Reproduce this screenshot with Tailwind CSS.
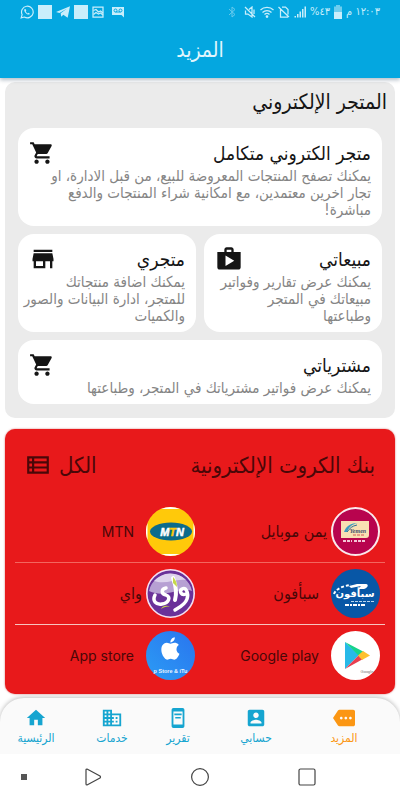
<!DOCTYPE html>
<html lang="ar" dir="rtl">
<head>
    <meta charset="UTF-8">
    <meta name="viewport" content="width=device-width, initial-scale=1.0">
    <title>المزيد</title>
    <!-- Tailwind CSS for styling -->
    <script src="https://cdn.jsdelivr.net/npm/@tailwindcss/browser@4"></script>
</head>
<body class="flex min-h-screen flex-col bg-white font-['DejaVu_Sans_Condensed','DejaVu_Sans',sans-serif] text-[#151515]">

    <!-- App header with the status bar -->
    <header class="relative z-10 bg-[#04a7e0] shadow-[0_2px_4px_rgba(0,40,70,0.3)]">
        <div dir="ltr" class="flex h-6 items-center justify-between pr-5 pl-5 text-[#c9eefb]">
            <div class="flex items-center gap-1">
                <svg class="size-[14px]" viewBox="0 0 24 24" fill="none" stroke="currentColor" stroke-width="2"><path d="M2 22l1.600-5.600A10 10 0 1 1 7.400 20.600z"/><path d="M8 7c-2 2 0 5.500 3 7.800 3 2.200 5 2 6 0l-2.500-1.500-1.500 1.200c-1.500-.6-2.600-1.800-3.200-3.200l1-1.300L9.500 7z" fill="currentColor" stroke="none"/></svg>
                <span class="size-[14px] bg-current"></span>
                <svg class="size-[14px]" viewBox="0 0 24 24" fill="currentColor"><path d="M0 12L24 2l-4 20-7.500-5.500L9 20l-1-6L19 6 6 13.500z"/></svg>
                <span class="size-[14px] bg-current"></span>
                <svg class="size-3" viewBox="0 0 24 24" fill="none" stroke="currentColor" stroke-width="2.500"><path d="M2 2h20v20H2z"/><path d="M3 9l5-2 5 5 4-2 5 4M3 17l5-4 5 3 4-2 5 4"/></svg>
                <svg class="ml-1 size-3" viewBox="0 0 24 24"><path fill="currentColor" d="M0 2h24v21l-5-5H0z"/><g fill="none" stroke="#04a7e0" stroke-width="2"><circle cx="7" cy="9" r="3"/><circle cx="17" cy="9" r="3"/><path d="M7 12h10"/></g></svg>
            </div>
            <div class="flex items-center gap-1 text-[11px]">
                <svg class="h-3 w-2 opacity-50" viewBox="0 0 16 24" fill="none" stroke="currentColor" stroke-width="2"><path d="M2 6l12 11-6 5V2l6 5L2 18"/></svg>
                <svg class="ml-1 size-3" viewBox="0 0 24 24" fill="none" stroke="currentColor" stroke-width="2.500"><path d="M2 2l20 20M3 9v7h5l8 6V2l-6 5M20 7v9"/></svg>
                <svg class="h-3 w-[14px]" viewBox="0 0 28 24" fill="none" stroke="currentColor" stroke-width="2.500"><path d="M1 8c7-7 19-7 26 0M5 13c5-5 13-5 18 0M9 17c3-3 7-3 10 0"/><circle cx="14" cy="21" r="1.500" fill="currentColor"/></svg>
                <svg class="size-3" viewBox="0 0 24 24" fill="none" stroke="currentColor" stroke-width="2.500"><path d="M1 2l21 20M5 7v15h15M8 2h7l5 5v10"/></svg>
                <svg class="size-3" viewBox="0 0 24 24" fill="currentColor"><path d="M1 20h3v3H1zM6 16h3v7H6zM11 11h3v12h-3zM16 6h3v17h-3zM21 1h3v22h-3z"/></svg>
                <span>%٤٣</span>
                <svg class="h-[14px] w-2" viewBox="0 0 16 28" fill="currentColor"><path d="M4 0h8v3h4v25H0V3h4z" opacity=".55"/><path d="M0 14h16v14H0z"/></svg>
                <span dir="rtl">١٢:٠٣ م</span>
            </div>
        </div>
        <h1 class="h-[54px] pt-2 text-center text-[21px] leading-9 text-[#e2f6fd]">المزيد</h1>
    </header>

    <main class="flex grow flex-col gap-[11px] px-[5px] pt-1 pb-1">
        <!-- Online store -->
        <section class="rounded-[10px] bg-[#ebebeb] px-[13px] pb-[14px]">
            <h2 class="-mr-[5px] h-[46px] text-[21px] leading-[40px]">المتجر الإلكتروني</h2>
            <div class="grid grid-cols-2 gap-2">
                <a href="#" class="col-span-2 block rounded-2xl bg-white px-[11px] pt-[10px] pb-[7px]">
                    <div class="flex h-[30px] items-center justify-between">
                        <h3 class="text-[19px]">متجر الكتروني متكامل</h3>
                        <svg class="size-[26px]" viewBox="0 0 24 24" fill="currentColor"><path d="M7 18c-1.100 0-1.990.9-1.990 2S5.900 22 7 22s2-.9 2-2-.9-2-2-2zM1 2v2h2l3.600 7.590-1.350 2.450c-.16.280-.25.610-.25.960 0 1.100.9 2 2 2h12v-2H7.420c-.14 0-.25-.11-.25-.25l.03-.12.900-1.630h7.450c.75 0 1.410-.41 1.750-1.030l3.580-6.490c.08-.14.120-.31.120-.48 0-.55-.45-1-1-1H5.210l-.94-2H1zm16 16c-1.100 0-1.990.9-1.990 2s.89 2 1.990 2 2-.9 2-2-.9-2-2-2z"/></svg>
                    </div>
                    <p class="text-[15px] leading-[17px] whitespace-nowrap text-[#858585]">يمكنك تصفح المنتجات المعروضة للبيع، من قبل الادارة، او<br>تجار اخرين معتمدين، مع امكانية شراء المنتجات والدفع<br>مباشرة!</p>
                </a>
                <a href="#" class="block rounded-2xl bg-white px-[11px] pt-[10px] pb-[7px]">
                    <div class="flex h-[30px] items-center justify-between">
                        <h3 class="text-[19px]">مبيعاتي</h3>
                        <svg class="size-7" viewBox="0 0 24 24" fill="currentColor"><path d="M16 6V4c0-1.110-.89-2-2-2h-4c-1.110 0-2 .89-2 2v2H2v13c0 1.110.89 2 2 2h16c1.110 0 2-.89 2-2V6h-6zm-6-2h4v2h-4V4zM9 18V9l7.500 4.500L9 18z"/></svg>
                    </div>
                    <p class="text-[15px] leading-[17px] whitespace-nowrap text-[#858585]">يمكنك عرض تقارير وفواتير<br>مبيعاتك في المتجر<br>وطباعتها</p>
                </a>
                <a href="#" class="block rounded-2xl bg-white px-[11px] pt-[10px] pb-[7px]">
                    <div class="flex h-[30px] items-center justify-between">
                        <h3 class="text-[19px]">متجري</h3>
                        <svg class="size-7" viewBox="0 0 24 24" fill="currentColor"><path d="M20 4H4v2h16V4zm1 10v-2l-1-5H4l-1 5v2h1v6h10v-6h4v6h2v-6h1zm-9 4H6v-4h6v4z"/></svg>
                    </div>
                    <p class="text-[15px] leading-[17px] whitespace-nowrap text-[#858585]">يمكنك اضافة منتجاتك<br>للمتجر، ادارة البيانات والصور<br>والكميات</p>
                </a>
                <a href="#" class="col-span-2 block rounded-2xl bg-white px-[11px] pt-[10px] pb-[7px]">
                    <div class="flex h-[30px] items-center justify-between">
                        <h3 class="text-[19px]">مشترياتي</h3>
                        <svg class="size-[26px]" viewBox="0 0 24 24" fill="currentColor"><path d="M7 18c-1.100 0-1.990.9-1.990 2S5.900 22 7 22s2-.9 2-2-.9-2-2-2zM1 2v2h2l3.600 7.590-1.350 2.450c-.16.280-.25.610-.25.960 0 1.100.9 2 2 2h12v-2H7.420c-.14 0-.25-.11-.25-.25l.03-.12.900-1.630h7.450c.75 0 1.410-.41 1.750-1.030l3.580-6.490c.08-.14.120-.31.120-.48 0-.55-.45-1-1-1H5.210l-.94-2H1zm16 16c-1.100 0-1.990.9-1.990 2s.89 2 1.990 2 2-.9 2-2-.9-2-2-2z"/></svg>
                    </div>
                    <p class="text-[15px] leading-[17px] whitespace-nowrap text-[#858585]">يمكنك عرض فواتير مشترياتك في المتجر، وطباعتها</p>
                </a>
            </div>
        </section>

        <!-- Electronic cards bank -->
        <section class="rounded-[10px] bg-[#e8191b] px-[10px] pb-2 text-[#4a0708] shadow-[0_0_2px_rgba(180,0,0,0.6)]">
            <div class="flex h-[72px] items-center justify-between px-[10px]">
                <h2 class="text-[22px]">بنك الكروت الإلكترونية</h2>
                <a href="#" class="flex items-center gap-2 text-[22px]">الكل
                    <svg class="size-[26px]" viewBox="0 0 24 24" fill="none" stroke="currentColor" stroke-width="2"><path d="M3 5h18v14H3zM3 9.600h18M3 14.300h18M7.500 5v14"/></svg>
                </a>
            </div>
            <ul class="grid grid-cols-2">
                <li class="border-b border-[#f3665f]">
                    <a href="#" class="flex h-[61px] items-center gap-1 pr-[5px]">
                        <svg class="size-[49px]" viewBox="0 0 49 49"><circle cx="24.500" cy="24.500" r="23.500" fill="#b8044e" stroke="#fbe9ec" stroke-width="2"/><path d="M10 14h28v14q0 3-3 3H10z" fill="#f9dfb3"/><path d="M13 25c2-6 7-9 14-9-6 1-9 4-11 9z" fill="#3d9cc0"/><path d="M16 25c3-4 5-6 10-7" stroke="#2b6f96" fill="none"/><text x="27" y="26" font-size="6" font-style="italic" font-weight="bold" text-anchor="middle" fill="#43506b" font-family="Liberation Serif">Yemen</text><path d="M22 28h12" stroke="#d35a5a" stroke-dasharray="3 1"/><path d="M12 34h9M23 34h12" stroke="#f3c6d6" stroke-width="2" stroke-dasharray="3 1"/></svg>
                        <span class="text-base">يمن موبايل</span>
                    </a>
                </li>
                <li class="border-b border-[#f3665f]">
                    <a href="#" class="flex h-[61px] items-center gap-3 pr-[5px]">
                        <svg class="size-[49px]" viewBox="0 0 49 49"><circle cx="24.500" cy="24.500" r="24.500" fill="#ffc90a"/><path d="M15 2A24.500 24.500 0 0 1 34 2zM15 47A24.500 24.500 0 0 0 34 47zM1.500 16A24.500 24.500 0 0 0 1.500 33zM47.500 16A24.500 24.500 0 0 1 47.500 33z" fill="#fff"/><ellipse cx="25" cy="24.500" rx="21" ry="9" fill="#0b6b8b"/><text x="38" y="28.500" font-size="11" font-weight="bold" font-style="italic" text-anchor="end" fill="#fff" stroke="#fff" stroke-width=".5" font-family="Liberation Sans" direction="ltr">M<tspan fill="#ffc90a" stroke="#ffc90a">T</tspan>N</text></svg>
                        <span class="font-['Inter',sans-serif] text-sm">MTN</span>
                    </a>
                </li>
                <li class="border-b border-[#f8c4bf]">
                    <a href="#" class="flex h-[61px] items-center gap-3 pr-[5px]">
                        <svg class="size-[49px]" viewBox="0 0 49 49"><circle cx="24.500" cy="24.500" r="24.500" fill="#0857a6"/><path d="M3 25c2-5 8-8 17-9" stroke="#fff" stroke-width="2" stroke-dasharray="3 2" fill="none"/><path d="M18 17l8-2h9c3 0 2 4-2 5h-6l3-3-10 2z" fill="#fff"/><text x="24" y="28" font-size="10" font-weight="bold" text-anchor="middle" fill="#fff" font-family="DejaVu Sans">سبأفون</text><path d="M20 32.500h24" stroke="#b9d5ee" stroke-dasharray="3 1"/><path d="M14 36h21" stroke="#fff" stroke-width="2" stroke-dasharray="4 1 2 1"/></svg>
                        <span class="text-base">سبأفون</span>
                    </a>
                </li>
                <li class="border-b border-[#f8c4bf]">
                    <a href="#" class="flex h-[61px] items-center gap-1 pr-[5px]">
                        <svg class="size-[49px]" viewBox="0 0 49 49"><circle cx="24.500" cy="24.500" r="23.700" fill="#6a3199" stroke="#f4dff2" stroke-width="1.600"/><path d="M3 22A22 22 0 0 1 46 22C34 17 20 30 3 22z" fill="#b7a0d3"/><path d="M8 12A22 22 0 0 1 40 11C30 9 20 16 8 12z" fill="#ded3ec"/><g fill="none" stroke="#fff" stroke-linecap="round"><path d="M40 25c-5 2-7-3-4-5 4-2 7 4 5 10-2 6-9 9-12 11" stroke-width="3.500"/><path d="M27 9c3 8 4 15 2 22" stroke-width="4"/><path d="M20 19c-5 1-5 6 0 7 5 2 3 8-4 9-6 1-10-3-7-9" stroke-width="3.500"/></g><path d="M27 8c2 2 4 5 4 10l-4-4zM15 40c2-4 6-4 10-2-4-1-7 0-10 2z" fill="#c5d94a"/></svg>
                        <span class="text-base">واي</span>
                    </a>
                </li>
                <li>
                    <a href="#" class="flex h-[61px] items-center gap-3 pr-[5px]">
                        <svg class="size-[49px]" viewBox="0 0 49 49"><circle cx="24.500" cy="24.500" r="24.500" fill="#fff"/><path d="M14 11v27l14-14z" fill="#27b9e8"/><path d="M14 11l19 10-5 4z" fill="#16d38b"/><path d="M14 38l14-14 4 4z" fill="#e93e50"/><path d="M32 20l7 4.500-8 4.500-4-4.500z" fill="#fdc02f"/><text x="36" y="42" font-size="4" text-anchor="middle" fill="#777" font-family="Liberation Sans">Google</text></svg>
                        <span class="font-['Inter',sans-serif] text-sm">Google play</span>
                    </a>
                </li>
                <li>
                    <a href="#" class="flex h-[61px] items-center gap-3 pr-[5px]">
                        <svg class="size-[49px]" viewBox="0 0 49 49"><defs><linearGradient id="storeBlue" x1="0" y1="1" x2="1" y2="0"><stop offset="0" stop-color="#2b9cf5"/><stop offset="1" stop-color="#2a74ee"/></linearGradient></defs><circle cx="24.500" cy="24.500" r="24.500" fill="url(#storeBlue)"/><path transform="translate(11 4) scale(1.120)" fill="#fff" d="M18.700 19.500c-.8 1.200-1.700 2.500-3.100 2.500s-1.800-.8-3.300-.8-2 .8-3.300.8-2.200-1.300-3.100-2.500C4.200 17 3 12.500 4.700 9.400c.9-1.500 2.400-2.500 4.100-2.500 1.300 0 2.500.9 3.300.9s2.300-1.100 3.800-.9c.7 0 2.500.3 3.600 2-.1.100-2.200 1.300-2.100 3.800 0 3 2.600 4 2.700 4-.1.100-.5 1.400-1.400 2.800M13 3.500c.7-.8 1.900-1.500 2.900-1.500.1 1.200-.3 2.300-1 3.200-.7.800-1.800 1.500-2.900 1.400-.2-1.100.4-2.300 1-3.100"/><text x="24.500" y="42" font-size="5.500" font-weight="bold" text-anchor="middle" direction="ltr" fill="#e8f3ff" font-family="Liberation Sans">p Store &amp; iTu</text></svg>
                        <span class="font-['Inter',sans-serif] text-sm">App store</span>
                    </a>
                </li>
            </ul>
        </section>
    </main>

    <!-- Bottom tabs -->
    <nav class="grid h-14 grid-cols-[22fr_22fr_17fr_16fr_20fr] rounded-t-3xl bg-[#fafafa] pt-[9px] pr-3 text-[12px] text-[#16a5d0] shadow-[0_-1px_4px_rgba(0,0,0,0.25)]">
        <a href="#" class="flex flex-col items-center gap-px text-[#fb9613]">
            <svg class="size-[22px]" viewBox="0 0 24 24" fill="currentColor"><path d="M22 3H7c-.69 0-1.230.35-1.590.880L0 12l5.410 8.110c.36.530.97.890 1.660.890H22c1.100 0 2-.9 2-2V5c0-1.100-.9-2-2-2zM9 13.500c-.83 0-1.500-.67-1.500-1.500s.67-1.500 1.500-1.500 1.500.67 1.500 1.500-.67 1.500-1.500 1.500zm5 0c-.83 0-1.500-.67-1.500-1.500s.67-1.500 1.500-1.500 1.500.67 1.500 1.500-.67 1.500-1.500 1.500zm5 0c-.83 0-1.500-.67-1.500-1.500s.67-1.500 1.500-1.500 1.500.67 1.500 1.500-.67 1.500-1.500 1.500z"/></svg>
            <span class="leading-4">المزيد</span>
        </a>
        <a href="#" class="flex flex-col items-center gap-px">
            <svg class="size-[22px]" viewBox="0 0 24 24" fill="currentColor"><path d="M3 5v14c0 1.100.89 2 2 2h14c1.100 0 2-.9 2-2V5c0-1.100-.9-2-2-2H5c-1.110 0-2 .9-2 2zm12 4c0 1.660-1.340 3-3 3s-3-1.340-3-3 1.340-3 3-3 3 1.340 3 3zm-9 8c0-2 4-3.100 6-3.100s6 1.100 6 3.100v1H6v-1z"/></svg>
            <span class="leading-4">حسابي</span>
        </a>
        <a href="#" class="flex flex-col items-center gap-px">
            <svg class="size-[22px]" viewBox="0 0 24 24" fill="currentColor"><path d="M17 1H7a2 2 0 0 0-2 2v18a2 2 0 0 0 2 2h10a2 2 0 0 0 2-2V3a2 2 0 0 0-2-2zm0 18H7V5h10zM8 7h8v2H8zM9 11h6v1.500H9z"/></svg>
            <span class="leading-4">تقرير</span>
        </a>
        <a href="#" class="flex flex-col items-center gap-px">
            <svg class="size-[22px]" viewBox="0 0 24 24" fill="currentColor"><path d="M12 7V3H2v18h20V7H12zM6 19H4v-2h2v2zm0-4H4v-2h2v2zm0-4H4V9h2v2zm0-4H4V5h2v2zm4 12H8v-2h2v2zm0-4H8v-2h2v2zm0-4H8V9h2v2zm0-4H8V5h2v2zm10 12h-8v-2h2v-2h-2v-2h2v-2h-2V9h8v10zm-2-8h-2v2h2v-2zm0 4h-2v2h2v-2z"/></svg>
            <span class="leading-4">خدمات</span>
        </a>
        <a href="#" class="flex flex-col items-center gap-px pr-2">
            <svg class="size-[22px]" viewBox="0 0 24 24" fill="currentColor"><path d="M10 20v-6h4v6h5v-8h3L12 3 2 12h3v8z"/></svg>
            <span class="leading-4">الرئيسية</span>
        </a>
    </nav>

    <!-- Phone navigation keys -->
    <div dir="ltr" class="grid h-[46px] grid-cols-[40px_1fr_1fr_1fr_40px] items-center justify-items-center bg-white text-[#444]">
        <span class="ml-2 size-[6px] bg-[#555]"></span>
        <button type="button" aria-label="رجوع"><svg class="size-5" viewBox="0 0 20 20" fill="none" stroke="currentColor" stroke-width="1.200" stroke-linejoin="round"><path d="M3 3q0-1 1-1l13 7q1 1 0 2L4 18q-1 0-1-1z"/></svg></button>
        <button type="button" aria-label="الشاشة الرئيسية"><svg class="size-5" viewBox="0 0 20 20" fill="none" stroke="currentColor" stroke-width="1.200"><circle cx="10" cy="10" r="8.400"/></svg></button>
        <button type="button" aria-label="التطبيقات الأخيرة"><svg class="size-5" viewBox="0 0 20 20" fill="none" stroke="currentColor" stroke-width="1.200"><rect x="2" y="2" width="16" height="16" rx="1.500"/></svg></button>
    </div>

</body>
</html>
